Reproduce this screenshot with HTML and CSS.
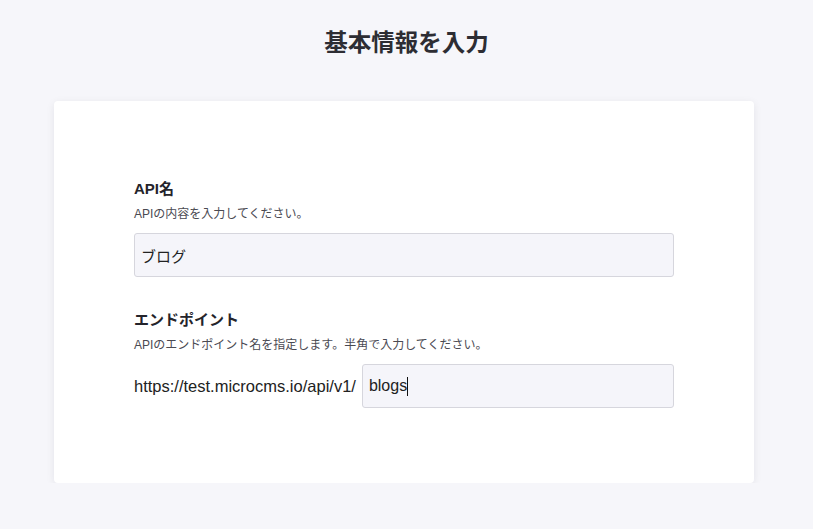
FILE: index.html
```html
<!DOCTYPE html>
<html lang="ja">
<head>
    <meta charset="UTF-8">
    <meta name="viewport" content="width=device-width, initial-scale=1.0">
    <title>基本情報を入力</title>
    <link rel="stylesheet" href="styles.css">
</head>
<body>
    <div class="page">
        <h1 class="title">基本情報を入力</h1>

        <div class="card">
            <div class="form-group">
                <label class="label" for="apiName">API名</label>
                <p class="desc">APIの内容を入力してください。</p>
                <input type="text" id="apiName" class="form-control" value="ブログ">
            </div>

            <div class="form-group">
                <label class="label" for="endpoint">エンドポイント</label>
                <p class="desc">APIのエンドポイント名を指定します。半角で入力してください。</p>
                <div class="endpoint-row">
                    <span class="prefix">https://test.microcms.io/api/v1/</span>
                    <div class="form-control endpoint-input">blogs<span class="caret"></span></div>
                </div>
            </div>
        </div>
    </div>
</body>
</html>
```

FILE: styles.css
```css
* {
    box-sizing: border-box;
    margin: 0;
    padding: 0;
}

body {
    font-family: "Liberation Sans", "Noto Sans CJK JP", sans-serif;
    background-color: #f6f6fa;
    color: #2d2d35;
}

.page {
    padding-top: 26px;
}

.title {
    text-align: center;
    font-size: 23.5px;
    font-weight: 700;
    line-height: 34px;
    color: #2d2d33;
}

.card {
    width: 700px;
    margin: 41px 0 0 54px;
    background-color: white;
    border-radius: 4px;
    box-shadow: 0 2px 8px rgba(0, 0, 40, 0.08);
    padding: 78px 80px 75px;
}

.form-group + .form-group {
    margin-top: 33px;
}

.label {
    display: block;
    font-size: 15px;
    font-weight: 700;
    line-height: 20px;
    color: #24242b;
}

.desc {
    font-size: 12px;
    line-height: 18px;
    margin-top: 6px;
    color: #4a4a52;
}

.form-control {
    display: block;
    width: 100%;
    height: 44px;
    margin-top: 10px;
    padding: 0 6px;
    border: 1px solid #d6d6dd;
    border-radius: 3px;
    background-color: #f5f5fa;
    font-family: "Liberation Sans", "Noto Sans CJK JP", sans-serif;
    font-size: 15px;
    color: #222;
}

.endpoint-row {
    display: flex;
    align-items: center;
    gap: 6px;
    margin-top: 10px;
}

.prefix {
    font-size: 16.5px;
    color: #222;
    white-space: nowrap;
}

.endpoint-input {
    flex: 1;
    margin-top: 0;
    display: flex;
    align-items: center;
    font-size: 16px;
}

.caret {
    display: inline-block;
    width: 1px;
    height: 19px;
    background-color: #111;
}
```
